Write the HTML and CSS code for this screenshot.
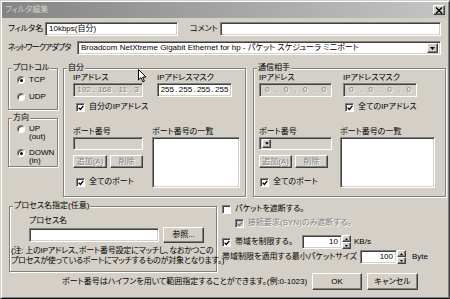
FILE: index.html
```html
<!DOCTYPE html>
<html lang="ja">
<head>
    <meta charset="UTF-8">
    <title>フィルタ編集</title>
    <link rel="stylesheet" href="styles.css">
</head>
<body>
    <div class="window">
        <div class="titlebar">
            <span class="title">フィルタ編集</span>
            <span class="btn close-btn">
                <svg viewBox="0 0 8 7" width="8" height="7"><path d="M1 0.5 L7 6.5 M7 0.5 L1 6.5"/></svg>
            </span>
        </div>

        <div class="body">
            <div class="row row-name">
                <span class="lbl lbl-name">フィルタ名</span>
                <div class="field field-name">10kbps(自分)</div>
                <span class="lbl lbl-comment">コメント</span>
                <div class="field field-comment"></div>
            </div>

            <div class="row row-adapter">
                <span class="lbl lbl-adapter">ネットワークアダプタ</span>
                <div class="field select">
                    <span class="select-text">Broadcom NetXtreme Gigabit Ethernet for hp - パケット スケジューラ ミニポート</span>
                    <span class="btn drop-btn">
                        <svg viewBox="0 0 5 3" width="5" height="3"><path d="M0 0 H5 L2.5 3 Z"/></svg>
                    </span>
                </div>
            </div>

            <div class="main">
                <div class="col-left">
                    <div class="group group-proto">
                        <span class="group-title">プロトコル</span>
                        <div class="radio-row radio-tcp"><span class="rad on"></span><span>TCP</span></div>
                        <div class="radio-row radio-udp"><span class="rad"></span><span>UDP</span></div>
                    </div>
                    <div class="group group-dir">
                        <span class="group-title">方向</span>
                        <div class="radio-row radio-up"><span class="rad"></span><span>UP<br>(out)</span></div>
                        <div class="radio-row radio-down"><span class="rad on"></span><span>DOWN<br>(in)</span></div>
                    </div>
                </div>

                <div class="group group-self">
                    <span class="group-title">自分</span>
                    <div class="group-body">
                        <div class="ip-row">
                            <div class="ip-col">
                                <div class="sub-lbl">IPアドレス</div>
                                <div class="field ip-field disabled">
                                    <span>192</span><i>.</i><span>168</span><i>.</i><span>11</span><i>.</i><span>3</span>
                                </div>
                            </div>
                            <div class="mask-col">
                                <div class="sub-lbl">IPアドレスマスク</div>
                                <div class="field ip-field">
                                    <span>255</span><i>.</i><span>255</span><i>.</i><span>255</span><i>.</i><span>255</span>
                                </div>
                            </div>
                        </div>
                        <div class="check-row check-ip">
                            <span class="chk"><svg viewBox="0 0 7 7"><polyline points="0.8,3.2 2.8,5.2 6.2,1"/></svg></span>
                            <span>自分のIPアドレス</span>
                        </div>
                        <div class="port-row">
                            <div class="port-col">
                                <div class="sub-lbl">ポート番号</div>
                                <div class="field port-field disabled"></div>
                                <div class="btn-row">
                                    <span class="btn small-btn add-btn disabled-text">追加(A)</span>
                                    <span class="btn small-btn del-btn disabled-text">削除</span>
                                </div>
                                <div class="check-row check-port">
                                    <span class="chk"><svg viewBox="0 0 7 7"><polyline points="0.8,3.2 2.8,5.2 6.2,1"/></svg></span>
                                    <span>全てのポート</span>
                                </div>
                            </div>
                            <div class="list-col">
                                <div class="sub-lbl">ポート番号の一覧</div>
                                <div class="field listbox"></div>
                            </div>
                        </div>
                    </div>
                </div>

                <div class="group group-peer">
                    <span class="group-title">通信相手</span>
                    <div class="group-body">
                        <div class="ip-row">
                            <div class="ip-col">
                                <div class="sub-lbl">IPアドレス</div>
                                <div class="field ip-field disabled">
                                    <span>0</span><i>.</i><span>0</span><i>.</i><span>0</span><i>.</i><span>0</span>
                                </div>
                            </div>
                            <div class="mask-col">
                                <div class="sub-lbl">IPアドレスマスク</div>
                                <div class="field ip-field disabled">
                                    <span>0</span><i>.</i><span>0</span><i>.</i><span>0</span><i>.</i><span>0</span>
                                </div>
                            </div>
                        </div>
                        <div class="check-row check-ip">
                            <span class="chk"><svg viewBox="0 0 7 7"><polyline points="0.8,3.2 2.8,5.2 6.2,1"/></svg></span>
                            <span>全てのIPアドレス</span>
                        </div>
                        <div class="port-row">
                            <div class="port-col">
                                <div class="sub-lbl">ポート番号</div>
                                <div class="field port-field combo disabled">
                                    <span class="btn combo-btn">
                                        <svg viewBox="0 0 5 3" width="4" height="3"><path d="M0 0 H5 L2.5 3 Z"/></svg>
                                    </span>
                                </div>
                                <div class="btn-row">
                                    <span class="btn small-btn add-btn disabled-text">追加(A)</span>
                                    <span class="btn small-btn del-btn disabled-text">削除</span>
                                </div>
                                <div class="check-row check-port">
                                    <span class="chk"><svg viewBox="0 0 7 7"><polyline points="0.8,3.2 2.8,5.2 6.2,1"/></svg></span>
                                    <span>全てのポート</span>
                                </div>
                            </div>
                            <div class="list-col">
                                <div class="sub-lbl">ポート番号の一覧</div>
                                <div class="field listbox"></div>
                            </div>
                        </div>
                    </div>
                </div>
            </div>

            <div class="lower">
                <div class="group group-proc">
                    <span class="group-title">プロセス名指定(任意)</span>
                    <div class="proc-body">
                        <div class="sub-lbl proc-lbl">プロセス名</div>
                        <div class="proc-row">
                            <div class="field proc-field"></div>
                            <span class="btn browse-btn">参照...</span>
                        </div>
                        <div class="proc-note">(注: 上のIPアドレス、ポート番号設定にマッチし、なおかつこの<br>プロセスが使っているポートにマッチするものが対象となります。)</div>
                    </div>
                </div>

                <div class="options">
                    <div class="check-row opt-block">
                        <span class="chk"></span>
                        <span>パケットを遮断する。</span>
                    </div>
                    <div class="check-row opt-syn disabled-text">
                        <span class="chk chk-disabled"><svg viewBox="0 0 7 7"><polyline points="0.8,3.2 2.8,5.2 6.2,1"/></svg></span>
                        <span>接続要求(SYN)のみ遮断する。</span>
                    </div>
                    <div class="opt-row opt-limit">
                        <div class="check-row opt-label">
                            <span class="chk"><svg viewBox="0 0 7 7"><polyline points="0.8,3.2 2.8,5.2 6.2,1"/></svg></span>
                            <span>帯域を制限する。</span>
                        </div>
                        <div class="spin spin-rate">
                            <div class="field spin-field">10</div>
                            <div class="spin-btns">
                                <span class="btn spin-btn"><svg viewBox="0 0 3 2" width="3" height="2"><path d="M0 2 H3 L1.5 0 Z"/></svg></span>
                                <span class="btn spin-btn"><svg viewBox="0 0 3 2" width="3" height="2"><path d="M0 0 H3 L1.5 2 Z"/></svg></span>
                            </div>
                        </div>
                        <span class="unit">KB/s</span>
                    </div>
                    <div class="opt-row opt-size">
                        <span class="opt-label size-label">帯域制限を適用する最小パケットサイズ</span>
                        <div class="spin spin-size">
                            <div class="field spin-field">100</div>
                            <div class="spin-btns">
                                <span class="btn spin-btn"><svg viewBox="0 0 3 2" width="3" height="2"><path d="M0 2 H3 L1.5 0 Z"/></svg></span>
                                <span class="btn spin-btn"><svg viewBox="0 0 3 2" width="3" height="2"><path d="M0 0 H3 L1.5 2 Z"/></svg></span>
                            </div>
                        </div>
                        <span class="unit unit-byte">Byte</span>
                    </div>
                </div>
            </div>

            <div class="footer">
                <span class="footer-note">ポート番号はハイフンを用いて範囲指定することができます。(例:0-1023)</span>
                <span class="btn push-btn ok-btn">OK</span>
                <span class="btn push-btn cancel-btn">キャンセル</span>
            </div>
        </div>

        <svg class="cursor" viewBox="0 0 9 14" width="9" height="14">
            <path d="M0.5 0.5 V11 L3 8.6 L4.8 12.8 L6.4 12.1 L4.7 8.1 H8 Z"/>
        </svg>
    </div>
</body>
</html>
```

FILE: styles.css
```css
* {
    box-sizing: border-box;
}

body {
    margin: 0;
    background: #d4d0c8;
    color: #000;
    font-family: "Liberation Sans", "Noto Sans CJK JP", sans-serif;
    font-size: 8px;
    line-height: 10px;
    font-feature-settings: "palt";
}

.window {
    position: relative;
    width: 450px;
    height: 299px;
    padding: 1px 2px 3px 1px;
    border: 1px solid;
    border-color: #d4d0c8 #404040 #101010 #d4d0c8;
    box-shadow: inset 1px 1px #fff, inset -1px -1px #808080;
    background: #d4d0c8;
    display: flex;
    flex-direction: column;
}

/* 3D parts */
.btn {
    background: #d4d0c8;
    border: 1px solid;
    border-color: #fff #404040 #404040 #fff;
    box-shadow: inset -1px -1px #808080;
    display: flex;
    align-items: center;
    justify-content: center;
}

.field {
    height: 14px;
    background: #fff;
    border: 1px solid;
    border-color: #808080 #fff #fff #808080;
    box-shadow: inset 1px 1px #404040, inset -1px -1px #d4d0c8;
    padding: 0 3px;
    display: flex;
    align-items: center;
    white-space: nowrap;
    overflow: hidden;
}

.field.disabled {
    background: #d4d0c8;
    color: #808080;
}

.disabled-text,
.field.disabled span,
.field.disabled i {
    color: #808080;
    text-shadow: 1px 1px #fff;
}

/* title bar */
.titlebar {
    height: 16px;
    flex: none;
    padding: 0 2px 0 3px;
    background: linear-gradient(90deg, #848484, #c4c4c4);
    display: flex;
    align-items: center;
    justify-content: space-between;
}

.title {
    color: #d4d0c8;
}

.close-btn {
    width: 12px;
    height: 10px;
}

.close-btn svg {
    stroke: #000;
    stroke-width: 1.4;
}

.body {
    flex: 1;
    padding: 4px 1px 0 6px;
    display: flex;
    flex-direction: column;
}

/* top rows */
.row {
    height: 14px;
    display: flex;
    align-items: center;
    margin-right: 5px;
}

.row-adapter {
    margin-top: 5px;
}

.lbl {
    flex: none;
    white-space: nowrap;
}

.lbl-name { width: 37px; }
.field-name { width: 133px; }
.lbl-comment { width: 30px; margin-left: 12px; }
.field-comment { flex: 1; }

.lbl-adapter {
    width: 69px;
    letter-spacing: -0.9px;
}

.select {
    flex: 1;
    padding-right: 2px;
}

.select-text {
    flex: 1;
    overflow: hidden;
}

.drop-btn {
    width: 11px;
    height: 10px;
}

/* groups */
.main {
    height: 129px;
    margin-top: 13px;
    display: flex;
}

.group {
    border: 1px solid #808080;
    box-shadow: inset 1px 1px #fff, 1px 1px #fff;
    display: flex;
    flex-direction: column;
}

.group-title {
    align-self: flex-start;
    margin: -6px 0 0 3px;
    padding: 0 1px;
    background: #d4d0c8;
    white-space: nowrap;
}

.col-left {
    width: 50px;
    display: flex;
    flex-direction: column;
}

.group-proto {
    height: 42px;
}

.group-dir {
    height: 49px;
    margin-top: 8px;
}

.radio-row {
    display: flex;
    align-items: flex-start;
    gap: 4px;
    padding-left: 8px;
    line-height: 10px;
}

.radio-tcp { margin-top: 2px; }
.radio-udp { margin-top: 7px; }

.group-dir .radio-row { line-height: 8px; }
.radio-up { margin-top: 2px; }
.radio-down { margin-top: 8px; }

.rad {
    width: 8px;
    height: 8px;
    flex: none;
    margin-top: 1px;
    border-radius: 50%;
    background: #fff;
    border: 1px solid;
    border-color: #808080 #fff #fff #808080;
    box-shadow: inset 1px 1px #404040;
    display: flex;
    align-items: center;
    justify-content: center;
}

.group-dir .rad { margin-top: 0; }

.rad.on::after {
    content: "";
    width: 3px;
    height: 3px;
    border-radius: 50%;
    background: #000;
}

.group-self {
    width: 183px;
    margin-left: 5px;
}

.group-peer {
    width: 193px;
    margin-left: 7px;
}

.group-self .group-body { padding-left: 9px; }
.group-peer .group-body { padding-left: 5px; }

.ip-row,
.port-row {
    display: flex;
}

.ip-field {
    justify-content: space-around;
    padding: 0 2px;
}

.ip-field i {
    font-style: normal;
}

.group-self .ip-col { width: 70px; }
.group-self .mask-col { width: 75px; margin-left: 14px; }
.group-peer .ip-col { width: 73px; }
.group-peer .mask-col { width: 74px; margin-left: 11px; }

.check-row {
    display: flex;
    align-items: center;
    gap: 4px;
    height: 10px;
    white-space: nowrap;
}

.check-ip { margin-top: 5px; }
.group-self .check-ip { margin-left: 3px; }
.group-peer .check-ip { margin-left: 86px; }

.chk {
    width: 9px;
    height: 9px;
    flex: none;
    background: #fff;
    border: 1px solid;
    border-color: #808080 #fff #fff #808080;
    box-shadow: inset 1px 1px #404040;
    display: flex;
    align-items: center;
    justify-content: center;
}

.chk svg {
    width: 6px;
    height: 6px;
    margin: 1px 0 0 1px;
    fill: none;
    stroke: #000;
    stroke-width: 1.6;
}

.chk-disabled {
    background: #d4d0c8;
}

.chk-disabled svg {
    stroke: #808080;
}

.port-row {
    margin-top: 15px;
}

.port-field {
    height: 13px;
}

.combo {
    padding: 0 0 0 2px;
}

.combo-btn {
    width: 9px;
    height: 9px;
}

.btn-row {
    display: flex;
    gap: 3px;
    margin-top: 5px;
}

.small-btn {
    height: 13px;
}

.group-self .port-col { width: 70px; }
.group-self .add-btn { width: 34px; }
.group-self .del-btn { width: 33px; }
.group-self .list-col { width: 88px; margin-left: 9px; }

.group-peer .port-col { width: 73px; }
.group-peer .add-btn { width: 33px; }
.group-peer .del-btn { width: 33px; }
.group-peer .list-col { width: 95px; margin-left: 8px; }

.check-port {
    margin-top: 9px;
    margin-left: 3px;
}

.group-peer .check-port { margin-left: 1px; }

.listbox {
    height: 51px;
}

/* lower part */
.lower {
    margin-top: 7px;
    display: flex;
}

.group-proc {
    width: 208px;
    height: 66px;
    margin-top: 2px;
    margin-left: 1px;
}

.proc-body {
    padding-left: 1px;
}

.proc-lbl {
    margin: 5px 0 0 18px;
}

.proc-row {
    display: flex;
    align-items: center;
    margin: 1px 0 0 18px;
}

.proc-field {
    width: 130px;
}

.browse-btn {
    width: 41px;
    height: 16px;
    margin-left: 4px;
}

.proc-note {
    margin-top: 3px;
    white-space: nowrap;
    letter-spacing: -0.2px;
}

.options {
    margin-left: 5px;
    display: flex;
    flex-direction: column;
}

.opt-syn {
    margin: 4px 0 0 13px;
}

.opt-row {
    display: flex;
    align-items: center;
    height: 14px;
}

.opt-limit { margin-top: 7px; }
.opt-size { margin-top: 1px; }

.opt-limit .opt-label { width: 80px; }
.size-label { width: 138px; white-space: nowrap; }

.spin {
    display: flex;
}

.spin-field {
    justify-content: flex-end;
}

.spin-rate .spin-field { width: 40px; }
.spin-size .spin-field { width: 37px; }

.spin-btns {
    display: flex;
    flex-direction: column;
}

.spin-btn {
    width: 9px;
    height: 7px;
}

.unit {
    margin-left: 3px;
}

.unit-byte {
    margin-left: 6px;
}

/* footer */
.footer {
    display: flex;
    align-items: center;
    height: 18px;
    padding-top: 1px;
}

.footer-note {
    width: 240px;
    margin-left: 54px;
    white-space: nowrap;
}

.push-btn {
    width: 50px;
    height: 17px;
}

.ok-btn { margin-left: 10px; }
.cancel-btn { width: 51px; margin-left: 5px; }

.cursor {
    position: absolute;
    left: 137px;
    top: 68px;
    fill: #fff;
    stroke: #000;
    stroke-width: 1;
}
```
